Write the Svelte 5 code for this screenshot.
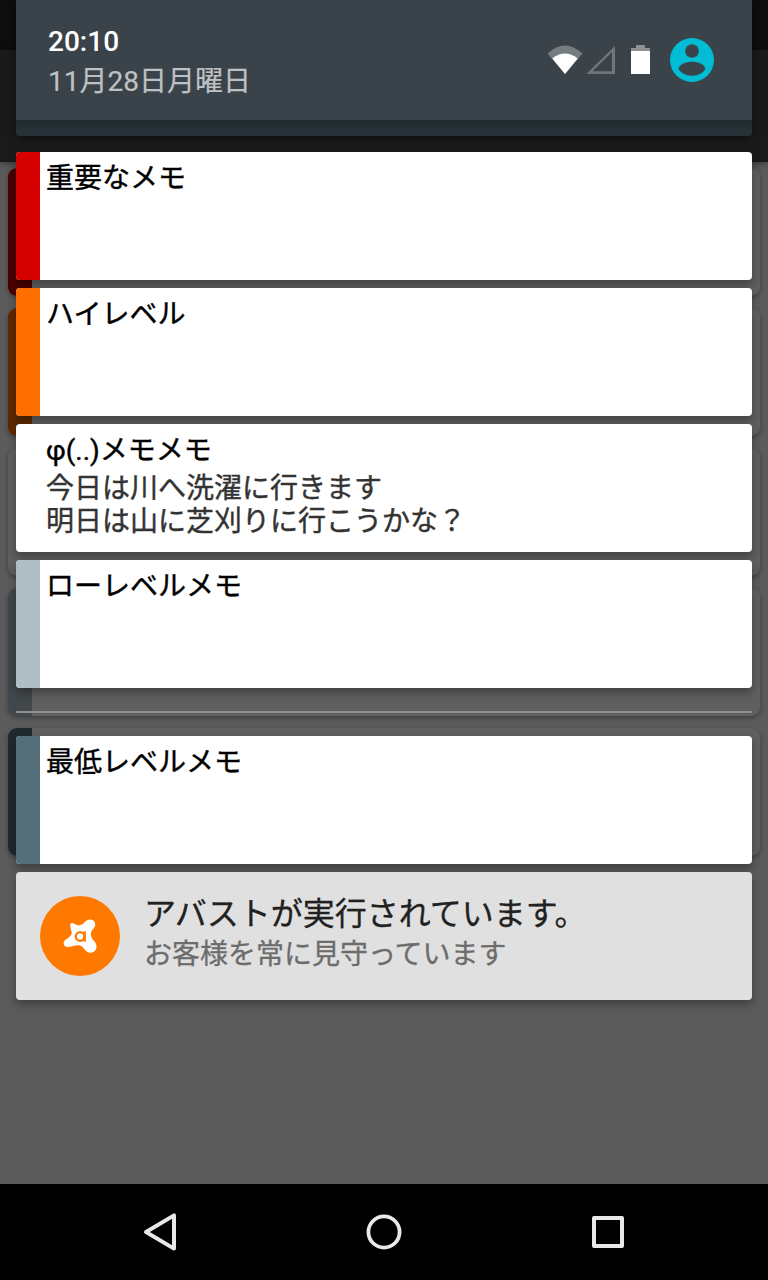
<script>
  const memos = [
    { title: '重要なメモ', lines: [], color: '#d50000', dim: '#4b0000' },
    { title: 'ハイレベル', lines: [], color: '#ff6f00', dim: '#5d2900' },
    {
      title: 'φ(..)メモメモ',
      lines: ['今日は川へ洗濯に行きます', '明日は山に芝刈りに行こうかな？'],
      color: 'transparent',
      dim: 'transparent'
    },
    { title: 'ローレベルメモ', lines: [], color: '#b0bec5', dim: '#41474a' },
    { title: '最低レベルメモ', lines: [], color: '#546e7a', dim: '#1f292e', low: true }
  ];
</script>

<div class="screen">
  <div class="stage">
    <div class="app">
      <div class="statusbar"></div>
      <div class="toolbar"></div>
      <div class="list">
        {#each memos as memo}
          <div class="item"><span class="item-strip" style="background: {memo.dim}"></span></div>
        {/each}
      </div>
    </div>

    <div class="shade">
      <header class="panel">
        <div class="head">
          <div class="clock">
            <div class="time">20:10</div>
            <div class="date">11月28日月曜日</div>
          </div>
          <svg class="status" width="176" height="56" viewBox="0 0 176 56">
            <path d="M7.5 21.6Q25 5.5 42.5 21.6L25 42Z" fill="#757d80" />
            <path d="M12.3 26.5Q25 16.5 37.7 26.5L25 42Z" fill="#fff" />
            <path d="M46.3 42H75V14Z M52.5 39.2 72 20V39.2Z" fill="#70777b" fill-rule="evenodd" />
            <path d="M91 19V16h5v-3h9v3h5v3Z" fill="#8c9194" />
            <path d="M91 19h19v23H91Z" fill="#fff" />
            <circle cx="152" cy="28" r="22" fill="#00bcd4" />
            <circle cx="152" cy="19" r="6.8" fill="#3b434a" />
            <path d="M138.4 37C141 27.3 163 27.3 165.4 37C160 46 144 46 138.4 37Z" fill="#3b434a" />
          </svg>
        </div>
        <div class="foot"></div>
      </header>

      <main class="notes">
        {#each memos as memo}
          {#if memo.low}<div class="divider"></div>{/if}
          <article class="note">
            <span class="strip" style="background: {memo.color}"></span>
            <div class="copy">
              <div class="title">{memo.title}</div>
              {#each memo.lines as line}<div class="line">{line}</div>{/each}
            </div>
          </article>
        {/each}

        <article class="note avast">
          <svg width="80" height="80" viewBox="0 0 80 80">
            <circle cx="40" cy="40" r="40" fill="#ff7800" />
            <path
              d="M31 27.2C34 26 36.2 30 39.5 29.3C45 28.5 44.5 23.8 50 23.5C54.5 23.5 56.5 28 54.3 31.5C52.5 34 50.3 35.5 51 39.5C51.5 43.8 57 46 56.5 51C56 56.5 50 58.5 46 55C43.5 52.7 43 50 38.5 49.3C34 49 30 51.5 27 51C23.5 50.3 22.6 46.5 25 44.3C27.5 42 31.5 40.5 31.7 37C32 34 28.8 30 31 27.2Z"
              fill="#fff"
            />
            <circle cx="40.1" cy="40.5" r="4.3" fill="none" stroke="#ff7800" stroke-width="2.3" />
            <path d="M44.7 35.2V45.7" stroke="#ff7800" stroke-width="2.3" />
          </svg>
          <div class="avast-copy">
            <div class="avast-title">アバストが実行されています。</div>
            <div class="avast-sub">お客様を常に見守っています</div>
          </div>
        </article>
      </main>
    </div>
  </div>

  <nav class="navbar">
    <svg width="44" height="44" viewBox="0 0 44 44">
      <path d="M8 22 36 5.4V38.6Z" fill="none" stroke="#e8e8e8" stroke-width="4" stroke-linejoin="round" />
    </svg>
    <svg width="44" height="44" viewBox="0 0 44 44">
      <circle cx="22" cy="22" r="15.6" fill="none" stroke="#e8e8e8" stroke-width="3.8" />
    </svg>
    <svg width="44" height="44" viewBox="0 0 44 44">
      <rect x="8" y="8" width="28" height="28" fill="none" stroke="#e8e8e8" stroke-width="4" stroke-linejoin="round" />
    </svg>
  </nav>
</div>

<style>
  :global(body) { margin: 0; }
  .screen {
    width: 768px;
    height: 1280px;
    display: flex;
    flex-direction: column;
    overflow: hidden;
    font-family: Roboto, 'Noto Sans CJK JP', sans-serif;
    font-size: 28px;
  }
  .stage {
    height: 1184px;
    display: grid;
    grid-template: 1184px / 768px;
    background: #5b5b5b;
    overflow: hidden;
  }
  .app, .shade { grid-area: 1 / 1; }
  .statusbar { height: 50px; background: #0d0d0d; }
  .toolbar { height: 112px; background: #1a1a1a; box-shadow: 0 2px 6px rgba(0, 0, 0, 0.4); }
  .list { display: flex; flex-direction: column; gap: 12px; padding: 6px 8px; }
  .item {
    display: flex;
    height: 128px;
    border-radius: 9px;
    background: #5f5f5f;
    box-shadow: 0 2px 5px rgba(0, 0, 0, 0.32);
    overflow: hidden;
  }
  .item-strip { width: 24px; }
  .shade { z-index: 1; padding: 0 16px; }
  .panel {
    height: 136px;
    border-radius: 0 0 4px 4px;
    overflow: hidden;
    box-shadow: 0 2px 8px rgba(0, 0, 0, 0.5);
  }
  .head {
    box-sizing: border-box;
    height: 120px;
    padding: 25px 36px 0 32px;
    display: flex;
    justify-content: space-between;
    background: #3b434a;
  }
  .status { margin-top: 7px; }
  .time { color: #fff; font-weight: 500; line-height: 33px; }
  .date { color: #bec1c3; line-height: 33px; margin-top: 7px; -webkit-text-stroke: 0.2px; }
  .foot { height: 16px; background: linear-gradient(#1f292e, #263238 60%); }
  .notes { display: flex; flex-direction: column; gap: 8px; margin-top: 16px; }
  .note {
    display: flex;
    height: 128px;
    border-radius: 4px;
    background: #fff;
    overflow: hidden;
    box-shadow: 0 5px 8px rgba(0, 0, 0, 0.3);
  }
  .strip { width: 24px; }
  .copy { padding: 10px 0 0 6px; white-space: nowrap; -webkit-text-stroke: 0.4px; }
  .title { color: #000; line-height: 33px; margin-bottom: 5px; }
  .line { color: #333; line-height: 33px; }
  .divider { height: 2px; margin: 15px 0; background: #8f8f8f; }
  .avast {
    box-sizing: border-box;
    padding: 24px;
    gap: 24px;
    background: #e0e0e0;
  }
  .avast-copy { margin-top: -1px; white-space: nowrap; -webkit-text-stroke: 0.3px; }
  .avast-title { font-size: 32px; line-height: 38px; color: #212121; }
  .avast-sub { line-height: 33px; margin-top: 5px; color: #6c6c6c; }
  .navbar {
    height: 96px;
    display: flex;
    align-items: center;
    justify-content: center;
    gap: 180px;
    background: #000;
  }
</style>
